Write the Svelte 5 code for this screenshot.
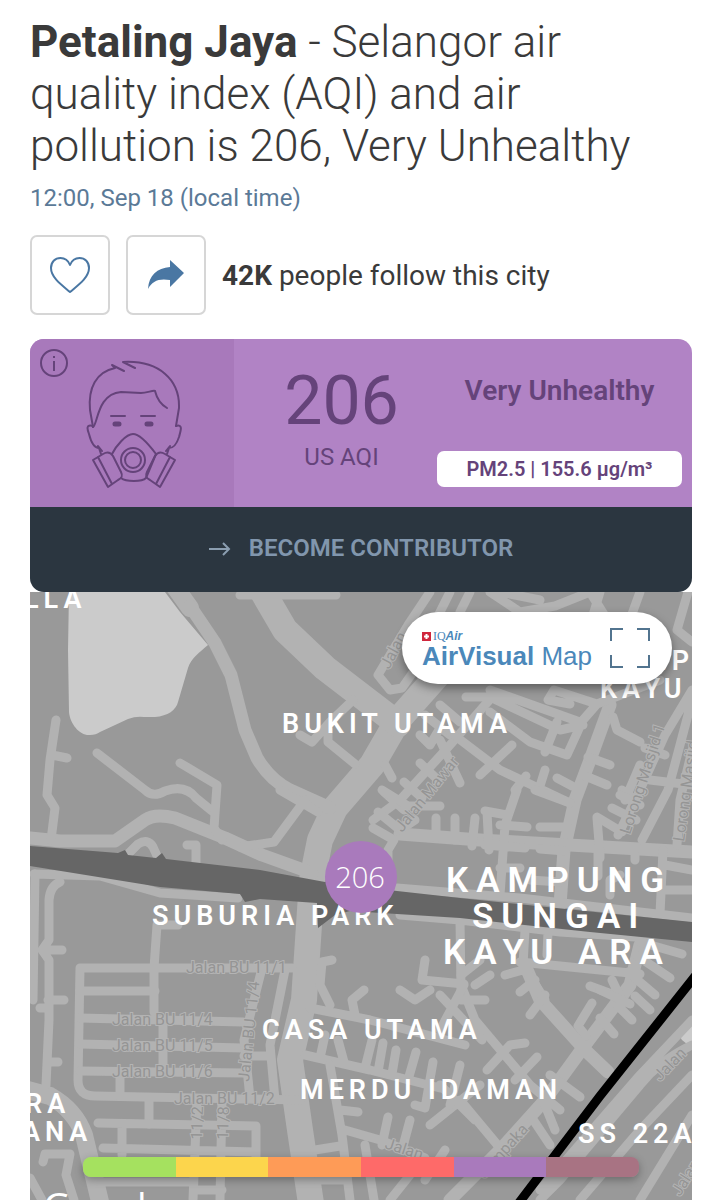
<script>
    const city = 'Petaling Jaya';
    const aqi = 206;
    const status = 'Very Unhealthy';

    // AQI scale, from good to hazardous
    const levels = [
        { name: 'Good', color: '#a5e15f' },
        { name: 'Moderate', color: '#fcd54c' },
        { name: 'Unhealthy for sensitive groups', color: '#fe9b57' },
        { name: 'Unhealthy', color: '#fe6a69' },
        { name: 'Very unhealthy', color: '#a97abc' },
        { name: 'Hazardous', color: '#a87383' }
    ];

    // Roads grouped by stroke width
    const roads = [
        { width: 26, paths: [
            'M460 650L398 720L372 765L335 808L320 840L312 880L304 1000L290 1060L300 1130L312 1210',
            'M250 570L285 630L325 668L398 724'
        ] },
        { width: 18, paths: [
            'M170 580L190 608',
            'M20 1088L50 1096Q75 1110 84 1135L102 1210'
        ] },
        { width: 13, paths: [
            'M190 606L215 643L231 675L245 730L257 758Q270 780 290 790L330 808',
            'M610 705L590 760L575 800L564 850L560 905',
            'M640 945L630 985L585 1045L545 1100L500 1150L450 1200',
            'M30 838L60 841L115 841L145 820Q155 813 175 818L225 838L262 855L312 873',
            'M400 834L480 840L692 852',
            'M525 965L540 1000L585 1050L608 1072'
        ] },
        { width: 9, paths: [
            'M56 720L50 760L47 795L55 808L51 840M52 755L67 758',
            'M97 753L145 790Q153 798 165 791Q185 784 196 798L212 811',
            'M180 763L217 785L214 828L222 840',
            'M127 855L138 844Q148 838 153 847L158 858M187 845H196V862',
            'M34 874L100 876L160 893L238 898M35 874L33 1000',
            'M60 882Q50 886 49 900V940L42 950L49 960V1020L46 1085M49 950H62M48 1000H64M40 1008H48M48 1062H58',
            'M178 925H157L154 968V1012M80 968H292M80 968L78 1080Q78 1096 95 1096L300 1100',
            'M80 991H155M80 1018L243 1022M80 1044L243 1048M80 1071L243 1073M163 1020V1070M120 1074V1096M149 1098V1124',
            'M98 1123L256 1126V1160M103 1148L256 1152M122 1125V1155M197 1100L193 1200M222 1100L220 1200M100 1182H190M195 1190H222',
            'M262 968L244 1040L250 1098M244 1056H270M285 970L270 1045L275 1100',
            'M43 1162L45 1154H70L66 1175L74 1200M30 1178L42 1200',
            'M240 847L274 842L305 800M280 790L318 812',
            'M353 700L330 722L312 742L300 735M328 730V742L355 764',
            'M430 592L408 625L378 675L390 690L402 688L416 668M240 595H336',
            'M450 592L430 632M470 592L460 612M490 592L520 612L555 606L590 592L620 640M540 600L500 592M600 592L590 625M640 592L628 625M688 592L677 630L692 642',
            'M373 820L400 800L450 745L492 697M385 765L392 778M420 763L438 780M404 782L422 798M384 792L404 810M440 740L460 783M420 735L430 745L440 728M425 715L450 735M440 705L460 722',
            'M466 697H490L560 730L583 725M490 690L580 722M490 712L530 742L567 755L583 720L597 704L554 690L548 700L570 704M557 722L545 752M597 704L660 680',
            'M450 732L500 770L570 803M480 775L512 745M545 770L540 786M515 790L526 776',
            'M613 717L617 730L640 742M645 748L665 755M588 757L610 765M583 775L607 785M557 778L572 786M622 790L635 800M640 765L625 800',
            'M692 690L665 735L640 790L618 835M692 700L668 790L642 840M692 750L680 800L677 845M650 780L692 785',
            'M517 790L505 825L500 895M535 790L570 803M485 811L507 815M487 812L489 850M475 818L472 846M500 825L527 827M485 845L525 848M540 827H568M540 849L565 851M436 818V838M455 818V840M597 818L600 855V858M597 817L622 832M612 808L636 820M620 795L640 805M598 850V876M635 855V860M663 850L660 914M665 865L692 870M665 890H692M500 868H520M530 880L560 882',
            'M373 828L394 840L388 850V880M378 812L400 830M382 790L408 806L440 806M400 830L415 820',
            'M397 888L520 898L692 918M400 915L460 920L560 932L650 938M460 920L461 990M548 932L547 955M610 895V880L620 875',
            'M525 930L523 965L545 1000M520 962L640 974M505 975L523 970M520 992L535 980M640 942L682 954M636 955L670 978M628 972L655 995M590 986L620 997L612 980',
            'M600 1018L614 1034M618 1006L632 1020M635 996L650 1010M592 1003L578 1026L586 1036M530 1015L545 995M600 990L630 1004',
            'M461 985L475 1020L530 1085L560 1110M487 1070L510 1045L525 1043M515 1080L537 1057M460 1100L500 1148M550 1075L580 1097M530 1115L550 1145M545 1105L555 1130M430 1125L480 1085M440 1085L475 1120',
            'M425 960L422 980L464 984M400 990L415 1000L430 990M464 985L440 1030M461 975L480 960M461 1000L485 1000M440 995L482 1040M475 985L490 975',
            'M332 960L322 962L320 985L330 1005M310 1008L370 1020L465 1045M355 1015L352 1000L364 990',
            'M305 1055L370 1070L440 1088M325 1035L320 1058M338 1040L344 1062M372 1040L365 1068M383 1043L378 1072M396 1050L392 1074M416 1052L408 1080M433 1062L425 1108L415 1105M460 1065L450 1105',
            'M330 1065L342 1135L350 1200M340 1110L358 1112M345 1130L380 1140L425 1158M388 1117L382 1145M410 1120L402 1150M365 1145L374 1200M315 1150L340 1146M425 1180L445 1150M390 1200L410 1175M318 1180H345',
            'M692 1045Q660 1060 640 1085L560 1180L540 1200M692 1075L640 1130L580 1200M692 1115L640 1200M692 1020L640 1075L540 1190'
        ] }
    ];

    const places = [
        { name: 'LLA', x: 24, y: 608 },
        { name: 'BUKIT UTAMA', x: 282, y: 733 },
        { name: 'KAMP', x: 598, y: 670 },
        { name: 'KAYU', x: 600, y: 698 },
        { name: 'SUBURIA PARK', x: 152, y: 925 },
        { name: 'CASA UTAMA', x: 262, y: 1039 },
        { name: 'MERDU IDAMAN', x: 300, y: 1099 },
        { name: 'RA', x: 25, y: 1113 },
        { name: 'ANA', x: 22, y: 1141 },
        { name: 'SS 22A', x: 578, y: 1143 }
    ];

    const districts = [
        { name: 'KAMPUNG', x: 446, y: 892 },
        { name: 'SUNGAI', x: 472, y: 928 },
        { name: 'KAYU ARA', x: 443, y: 964 }
    ];

    const streets = [
        { name: 'Jalan BU 11/1', x: 186, y: 973, turn: 0 },
        { name: 'Jalan BU 11/4', x: 112, y: 1025, turn: 0 },
        { name: 'Jalan BU 11/5', x: 112, y: 1051, turn: 0 },
        { name: 'Jalan BU 11/6', x: 112, y: 1077, turn: 0 },
        { name: 'Jalan BU 11/2', x: 174, y: 1104, turn: 0 },
        { name: 'Jalan BU 11/4', x: 249, y: 1082, turn: -84 },
        { name: 'Jalan Mawar', x: 402, y: 833, turn: -51 },
        { name: 'Jalan', x: 389, y: 670, turn: -62 },
        { name: 'Lorong Masjid 1', x: 630, y: 835, turn: -72 },
        { name: 'Lorong Masjid', x: 684, y: 842, turn: -82 },
        { name: 'Jalan', x: 384, y: 1148, turn: 18 },
        { name: 'Cempaka', x: 484, y: 1180, turn: -48 },
        { name: 'Jalan', x: 660, y: 1082, turn: -46 },
        { name: 'Jalan', x: 680, y: 1197, turn: -58 },
        { name: '11/2', x: 202, y: 1140, turn: -88 },
        { name: '11/8', x: 228, y: 1140, turn: -88 }
    ];
</script>

<main>
    <header>
        <h1><strong>{city}</strong> - Selangor air quality index (AQI) and air pollution is {aqi}, {status}</h1>
        <p class="time">12:00, Sep 18 (local time)</p>
        <div class="actions">
            <button aria-label="Follow this city">
                <svg width="42" height="38" viewBox="0 0 42 38">
                    <path d="M21 36C14 30 2 22 2 12C2 6 6 2 11.500 2C16 2 19 4 21 9C23 4 26 2 30.500 2C36 2 40 6 40 12C40 22 28 30 21 36Z" fill="none" stroke="#4a77a3" stroke-width="2" stroke-linejoin="round" />
                </svg>
            </button>
            <button aria-label="Share">
                <svg width="38" height="30" viewBox="0 0 38 30">
                    <path d="M23 0L37 13L23 27V20C12 18 5 21 1 29C2 15 10 8 23 7Z" fill="#4a77a3" />
                </svg>
            </button>
            <p><strong>42K</strong> people follow this city</p>
        </div>
    </header>

    <section class="card">
        <div class="aqi">
            <div class="face">
                <button class="info" aria-label="About the index">
                    <svg width="28" height="28" viewBox="0 0 28 28" fill="none" stroke="#65437a" stroke-width="2">
                        <circle cx="14" cy="14" r="13" />
                        <path d="M14 12V22M14 7V9" />
                    </svg>
                </button>
                <svg width="96" height="130" viewBox="0 0 96 130" fill="none" stroke="#65437a" stroke-width="2" stroke-linecap="round" stroke-linejoin="round">
                    <path d="M38 11L26 5L29 8C10 12 2 28 4 50L7 67" />
                    <path d="M49 8L37 2C73 0 94 20 93 48L90 66" />
                    <path d="M7 67C12 64 11 34 35 32L55 33C61 33 67 30 69 31C71 39 74 44 81 48" />
                    <path d="M7 66C0 64 1 69 3 74C6 86 10 88 13 88L15 94M12 86L16 91M90 66C97 64 95 70 93 77C90 86 87 88 83 88L81 94M84 86L80 91" />
                    <path d="M25 56H39M55 56H69" />
                    <path d="M29 64H33M61 64H65" stroke-width="5" />
                    <path d="M26 94C30 86 40 74 47 74C54 74 64 86 70 94L60 118C56 122 40 122 35 118" />
                    <circle cx="47" cy="100" r="12" />
                    <circle cx="47" cy="100" r="8" />
                    <path d="M7 100L17 94C22 91 25 93 27 96L35 112C37 116 36 118 32 120L22 127ZM12 97L26 124" />
                    <path d="M89 100L79 94C74 91 71 93 69 96L61 112C59 116 60 118 64 120L74 127ZM84 97L70 124" />
                </svg>
            </div>
            <div class="score">
                <strong>{aqi}</strong>
                <span>US AQI</span>
            </div>
            <div class="level">
                <strong>{status}</strong>
                <span class="pollutant">PM2.5 | 155.6 µg/m³</span>
            </div>
        </div>
        <a class="contribute" href="#contribute">
            <svg width="22" height="14" viewBox="0 0 22 14" fill="none" stroke="#8b9eb0" stroke-width="2">
                <path d="M0 7H20M14 1L20 7L14 13" />
            </svg>
            BECOME CONTRIBUTOR
        </a>
    </section>

    <section class="map">
        <svg class="tiles" viewBox="30 592 662 608" role="img" aria-label="Map of {city}">
            <rect x="30" y="592" width="662" height="608" fill="#999" />
            <path d="M69 592L68 650L69 712C70 724 80 736 90 735Q96 735 100 732L128 719Q136 716 144 717H155C168 716 176 710 178 702L188 668C191 658 200 652 208 645L180 612L165 592Z" fill="#cbcbcb" />
            <path d="M692 1018L681 1026Q677 1034 682 1040L692 1048Z" fill="#cbcbcb" />
            {#each roads as group}
                <g class="road" stroke-width={group.width}>
                    {#each group.paths as d}
                        <path {d} />
                    {/each}
                </g>
            {/each}
            <!-- Highway -->
            <path d="M30 846L118 853L125 850L128 855L156 858L162 853L166 859L260 870L325 882L397 891L460 898L692 922V942L590 932L460 918L350 911L335 915L318 928L317 903L260 899L245 902L240 894L160 887L30 866Z" fill="#666" />
            <!-- Railway -->
            <path d="M700 970L600 1096L515 1208" fill="none" stroke="#000" stroke-width="9" />
            {#each streets as street}
                <text class="street" transform="translate({street.x} {street.y}) rotate({street.turn})">{street.name}</text>
            {/each}
            {#each places as place}
                <text class="place" x={place.x} y={place.y}>{place.name}</text>
            {/each}
            {#each districts as district}
                <text class="district" x={district.x} y={district.y}>{district.name}</text>
            {/each}
            <text class="google" x="43" y="1221">Google</text>
            <circle cx="361" cy="877" r="36" fill="#a97abc" />
            <text class="station" x="360" y="888">{aqi}</text>
        </svg>

        <a class="map-link" href="#map">
            <span class="brand">
                <span class="iqair">
                    <svg width="9" height="9" viewBox="0 0 9 9">
                        <rect width="9" height="9" fill="#d0273d" />
                        <path d="M2 4.500H7M4.500 2V7" stroke="#fff" stroke-width="2" />
                    </svg>
                    <span>IQ<em>Air</em></span>
                </span>
                <span class="product"><b>AirVisual</b> Map</span>
            </span>
            <svg width="40" height="40" viewBox="0 0 40 40" fill="none" stroke="#52748f" stroke-width="2">
                <path d="M1 13V1H13M27 1H39V13M39 27V39H27M13 39H1V27" />
            </svg>
        </a>

        <div class="scale">
            {#each levels as level}
                <span title={level.name} style="background: {level.color}"></span>
            {/each}
        </div>
    </section>
</main>

<style>
:global(body) {
    margin: 0;
    background: #fff;
}

main {
    padding: 16px 30px 0;
    font-family: Roboto, sans-serif;
    color: #3a3a3a;
}

h1, p {
    margin: 0;
}

h1 {
    font-size: 44px;
    line-height: 52px;
    font-weight: 300;
}

h1 strong {
    font-weight: 700;
}

.time {
    margin-top: 12px;
    font-size: 24px;
    line-height: 28px;
    color: #5b7a97;
}

/* Follow and share */
.actions {
    display: flex;
    align-items: center;
    gap: 16px;
    margin: 23px 0 24px;
    font-size: 28px;
}

.actions button {
    display: flex;
    align-items: center;
    justify-content: center;
    width: 80px;
    height: 80px;
    padding: 0;
    background: #fff;
    border: 2px solid #d6d6d6;
    border-radius: 7px;
}

/* Index card */
.card {
    border-radius: 14px;
    overflow: hidden;
}

.aqi {
    display: grid;
    grid-template-columns: 204fr 203fr 255fr;
    min-height: 168px;
    background: #b183c5;
    color: #65437a;
}

.face {
    position: relative;
    display: flex;
    align-items: center;
    justify-content: center;
    padding: 4px 0 0 4px;
    background: #a879bb;
}

.info {
    position: absolute;
    top: 10px;
    left: 10px;
    display: flex;
    padding: 0;
    border: 0;
    background: none;
}

.score {
    display: flex;
    flex-direction: column;
    align-items: center;
    padding: 26px 0 0 12px;
}

.score strong {
    font-size: 68px;
    line-height: 72px;
    font-weight: 400;
}

.score span {
    margin-top: 6px;
    font-size: 24px;
    line-height: 28px;
}

.level {
    display: flex;
    flex-direction: column;
    justify-content: space-between;
    padding: 36px 10px 20px 0;
    text-align: center;
}

.level strong {
    font-size: 28px;
    line-height: 32px;
    font-weight: 600;
}

.pollutant {
    border-radius: 7px;
    background: #fff;
    font-size: 20px;
    line-height: 36px;
    font-weight: 600;
}

.contribute {
    display: flex;
    align-items: center;
    justify-content: center;
    gap: 18px;
    padding: 27px 0 29px;
    background: #2b3640;
    color: #8196ad;
    font-size: 24px;
    line-height: 29px;
    font-weight: 600;
    text-decoration: none;
}

/* Map */
.map {
    position: relative;
}

.tiles {
    display: block;
    width: 100%;
}

.road {
    fill: none;
    stroke: #b2b2b2;
    stroke-linecap: round;
    stroke-linejoin: round;
}

.street {
    fill: #959595;
    stroke: #b4b4b4;
    stroke-width: 2px;
    paint-order: stroke;
    font-size: 16px;
}

.place {
    fill: #fff;
    font-size: 27px;
    font-weight: 600;
    letter-spacing: 5px;
}

.district {
    fill: #fff;
    font-size: 35px;
    font-weight: 600;
    letter-spacing: 8px;
}

.google {
    fill: #fff;
    font-family: "Open Sans", sans-serif;
    font-size: 38px;
}

.station {
    fill: #fff;
    font-family: "Open Sans", sans-serif;
    font-size: 29px;
    font-weight: 300;
    text-anchor: middle;
}

.map-link {
    position: absolute;
    top: 20px;
    right: 20px;
    display: flex;
    align-items: center;
    gap: 18px;
    height: 72px;
    padding: 0 22px 0 20px;
    border-radius: 36px;
    background: #fff;
    box-shadow: 0 4px 10px rgba(0, 0, 0, 0.4);
    color: #4b88ba;
    font-family: "Liberation Sans", sans-serif;
    text-decoration: none;
}

.brand {
    display: flex;
    flex-direction: column;
    padding-top: 4px;
}

.iqair {
    display: flex;
    align-items: center;
    gap: 2px;
    font-family: "Liberation Serif", serif;
    font-size: 12px;
    line-height: 12px;
}

.iqair em {
    font-family: "Liberation Sans", sans-serif;
    font-weight: 700;
}

.product {
    font-size: 26px;
    line-height: 28px;
}

.scale {
    position: absolute;
    right: 8%;
    bottom: 23px;
    left: 8%;
    display: flex;
    height: 20px;
    border-radius: 8px;
    overflow: hidden;
    box-shadow: 0 3px 8px rgba(0, 0, 0, 0.3);
}

.scale span {
    flex: 1;
}
</style>
